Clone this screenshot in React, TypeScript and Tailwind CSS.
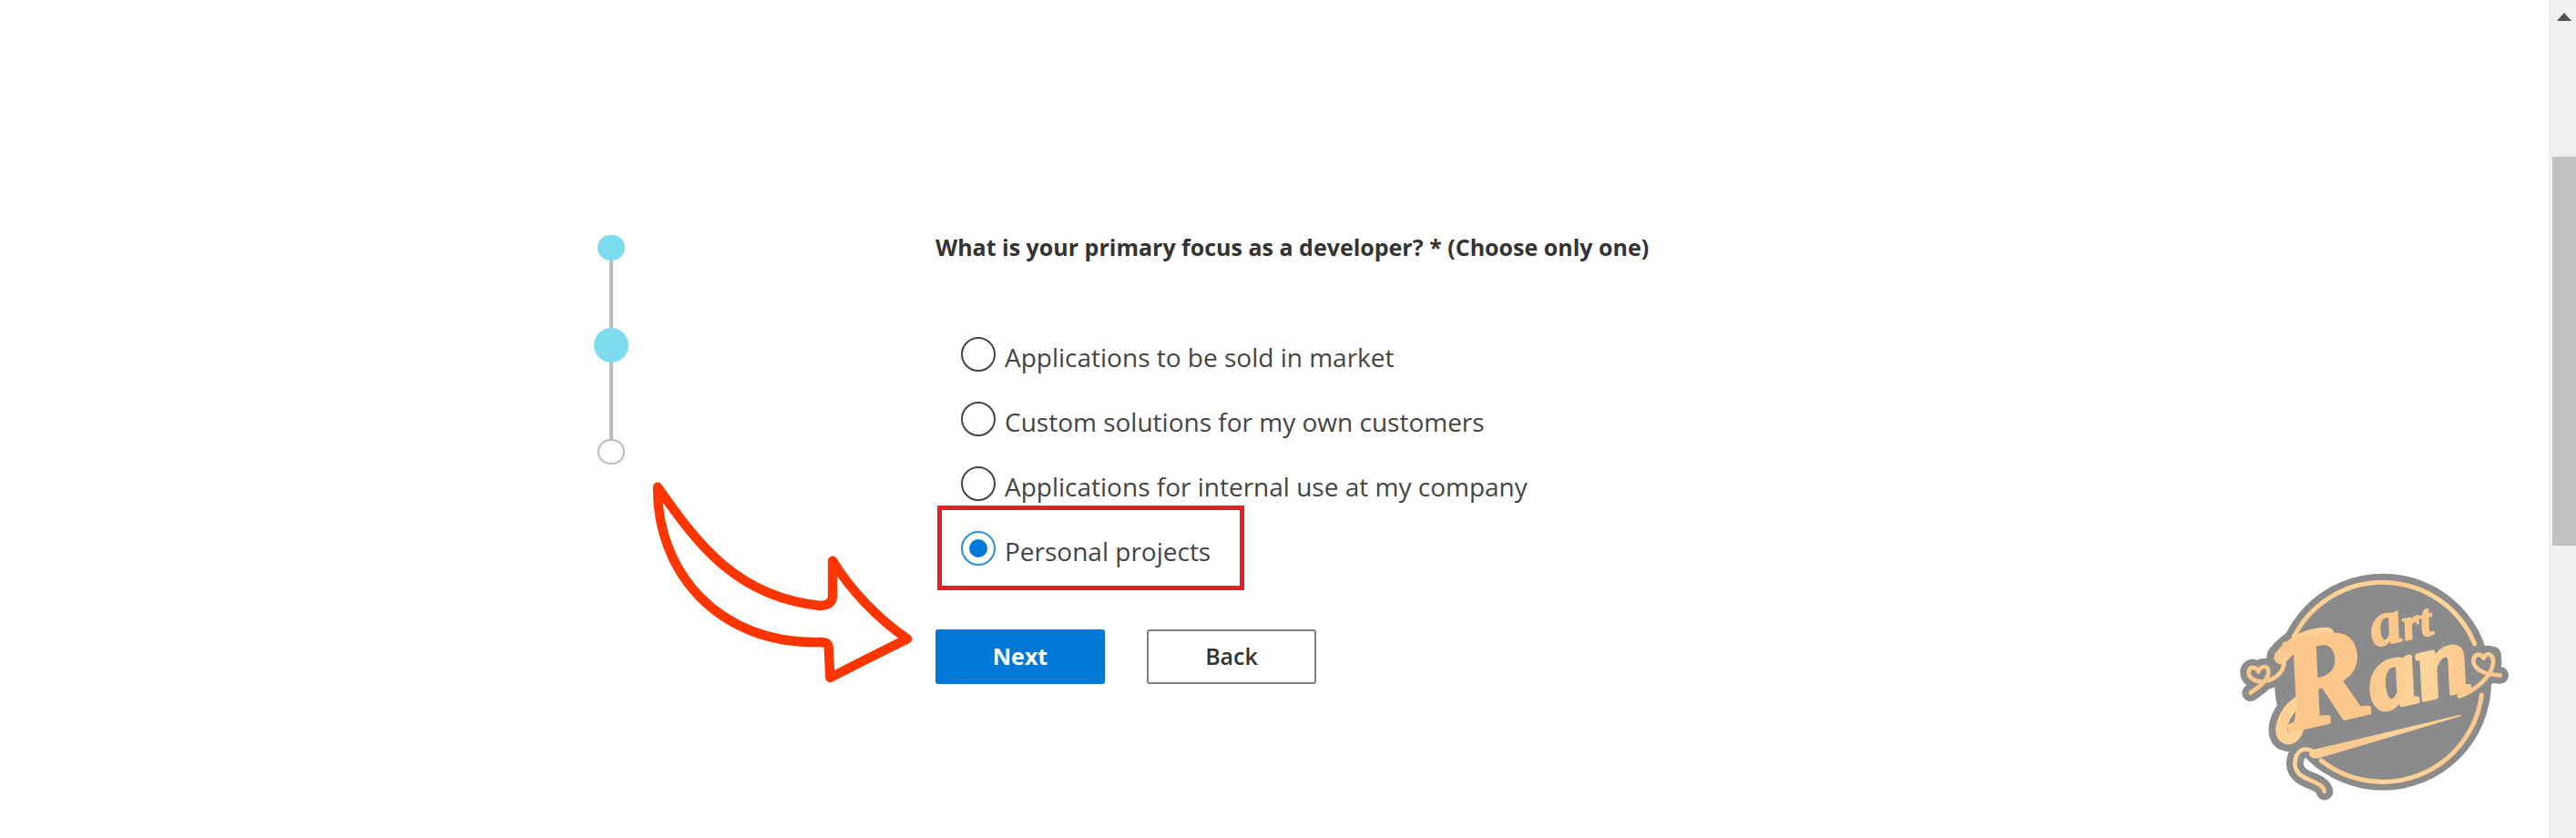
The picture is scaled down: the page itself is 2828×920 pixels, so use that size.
import { useState } from "react";

const options = [
  "Applications to be sold in market",
  "Custom solutions for my own customers",
  "Applications for internal use at my company",
  "Personal projects",
];

function Stepper() {
  return (
    <ol className="flex w-[38px] flex-col items-center pt-[7px]" aria-label="Progress">
      <li className="h-7 w-[30px] rounded-full bg-[#7ddcee]" />
      <li className="h-[74px] w-1 bg-[#bbbbbb]" aria-hidden="true" />
      <li className="size-[38px] rounded-full bg-[#7ddcee]" />
      <li className="h-[84px] w-1 bg-[#bbbbbb]" aria-hidden="true" />
      <li className="h-7 w-[30px] rounded-full border-2 border-[#bbbbbb] bg-white" />
    </ol>
  );
}

function Arrow() {
  return (
    <svg
      className="pointer-events-none absolute top-[258px] -left-[327px] h-[250px] w-[320px]"
      viewBox="0 0 960 750"
      fill="none"
      stroke="#ff3500"
      strokeWidth="31"
      strokeLinecap="round"
      strokeLinejoin="round"
      aria-hidden="true"
    >
      <path d="M66 77C200 270 330 440 603 468Q642 466 642 435L642 320C700 415 790 510 888 577Q760 640 634 705L629 605Q627 588 605 588C260 598 62 350 66 77Z" />
    </svg>
  );
}

/* Threads and flourishes of the badge, drawn once in grey as the backing and once in gold */
const thread = [
  "M92 455L126 430C158 402 156 368 138 369C125 369 119 380 118 386C112 368 90 367 86 384C84 404 105 421 138 417C172 412 197 390 203 358",
  "M780 466C840 446 886 397 891 358C895 327 867 317 860 341C847 318 822 330 827 356C836 386 872 395 914 397",
  "M300 648C272 634 240 638 238 690C243 750 328 738 336 780",
];
const swash = "M192 338C235 285 290 262 345 262";
const loop = "M262 480C262 540 250 606 214 606C175 600 195 520 250 485";

function Badge() {
  return (
    <svg
      className="absolute right-7 bottom-[31px] h-[280px] w-[330px]"
      viewBox="0 0 990 840"
      role="img"
      aria-label="art Ran"
    >
      <defs>
        <linearGradient id="gold" gradientUnits="userSpaceOnUse" x1="160" y1="300" x2="860" y2="520">
          <stop offset="0" stopColor="#fbc78b" />
          <stop offset="0.25" stopColor="#fcd59a" />
          <stop offset="0.45" stopColor="#fbc88e" />
          <stop offset="0.7" stopColor="#fcd59a" />
          <stop offset="1" stopColor="#fbc88e" />
        </linearGradient>
      </defs>

      <g fill="none" stroke="#8b8b8b" strokeLinecap="round" strokeLinejoin="round">
        <circle cx="528" cy="419" r="357" fill="#8b8b8b" stroke="none" />
        {thread.map((d) => (
          <path key={d} d={d} strokeWidth="56" />
        ))}
        <path d={swash} strokeWidth="94" />
        <path d={loop} strokeWidth="84" />
        <path d="M118 390L200 385" strokeWidth="56" />
        <path d="M858 340L890 330" strokeWidth="56" />
      </g>

      <g fill="none" stroke="url(#gold)" strokeLinecap="round" strokeLinejoin="round">
        <path d="M235 270A328 328 0 0 1 830 293" strokeWidth="15" />
        <path d="M853 462A328 328 0 0 1 325 678" strokeWidth="15" />
        {thread.map((d) => (
          <path key={d} d={d} strokeWidth="14" />
        ))}
        <path d={swash} strokeWidth="46" />
        <path d={loop} strokeWidth="38" />
        <path d="M300 642L782 527L785 532L318 670C280 674 276 648 300 642Z" fill="url(#gold)" stroke="none" />
      </g>

      <g fill="url(#gold)" stroke="url(#gold)" strokeLinejoin="round" fontFamily="Liberation Serif, serif" fontWeight="700" fontStyle="italic">
        <text transform="translate(222 580) rotate(-13)" fontSize="430" strokeWidth="14">
          R<tspan fontSize="320">an</tspan>
        </text>
        <text transform="translate(498 304) rotate(-12)" fontSize="210" strokeWidth="5">
          a<tspan fontSize="150">rt</tspan>
        </text>
      </g>
    </svg>
  );
}

function ScrollBar() {
  return (
    <div className="w-[30px] shrink-0 bg-[#f0f0f0] pl-1" aria-hidden="true">
      <div className="flex h-[172px] justify-center pt-3.5">
        <svg className="h-[9px] w-4" viewBox="0 0 16 9">
          <path d="M0 9L8 0L16 9Z" fill="#505050" />
        </svg>
      </div>
      <div className="h-[427px] bg-[#c1c1c1]" />
    </div>
  );
}

export default function App() {
  const [focus, setFocus] = useState("Personal projects");

  return (
    <div className="flex min-h-screen bg-white font-['Open_Sans','Noto_Sans',sans-serif] text-[#333333]">
      <main className="relative grid flex-1 grid-cols-[652fr_375fr_1771fr] pt-[251px]">
        {/* Steps */}
        <div className="col-start-2">
          <Stepper />
        </div>

        {/* Form */}
        <form className="relative" onSubmit={(e) => e.preventDefault()}>
          <Arrow />
          <fieldset>
            <legend className="text-[25px] leading-10 font-bold">
              What is your primary focus as a developer? * (Choose only one)
            </legend>
            <div className="mt-[62px] pl-7">
              {options.map((option) => (
                <label key={option} className="relative flex h-[71px] w-fit items-center gap-2.5">
                  <input
                    type="radio"
                    name="focus"
                    value={option}
                    checked={focus === option}
                    onChange={() => setFocus(option)}
                    className="grid size-[38px] appearance-none place-items-center rounded-full border-2 border-[#444444] checked:border-[#2b8fdd] checked:before:size-5 checked:before:rounded-full checked:before:bg-[#0078d7] checked:before:content-['']"
                  />
                  <span className="pt-1.5 text-[28px] leading-10 text-[#444444]">{option}</span>
                  {/* Highlight box */}
                  {option === "Personal projects" && (
                    <span className="pointer-events-none absolute -inset-y-[11px] -left-[26px] w-[337px] border-[5px] border-[#ed1c24]" />
                  )}
                </label>
              ))}
            </div>
          </fieldset>

          {/* Buttons */}
          <div className="mt-[54px] flex gap-[46px]">
            <button type="submit" className="h-[60px] w-[186px] rounded-[3px] bg-[#0078d7] text-[25px] font-bold text-white">
              Next
            </button>
            <button type="button" className="h-[60px] w-[186px] rounded-[3px] border-2 border-[#808080] bg-white text-[25px] font-semibold">
              Back
            </button>
          </div>
        </form>

        <Badge />
      </main>
      <ScrollBar />
    </div>
  );
}
